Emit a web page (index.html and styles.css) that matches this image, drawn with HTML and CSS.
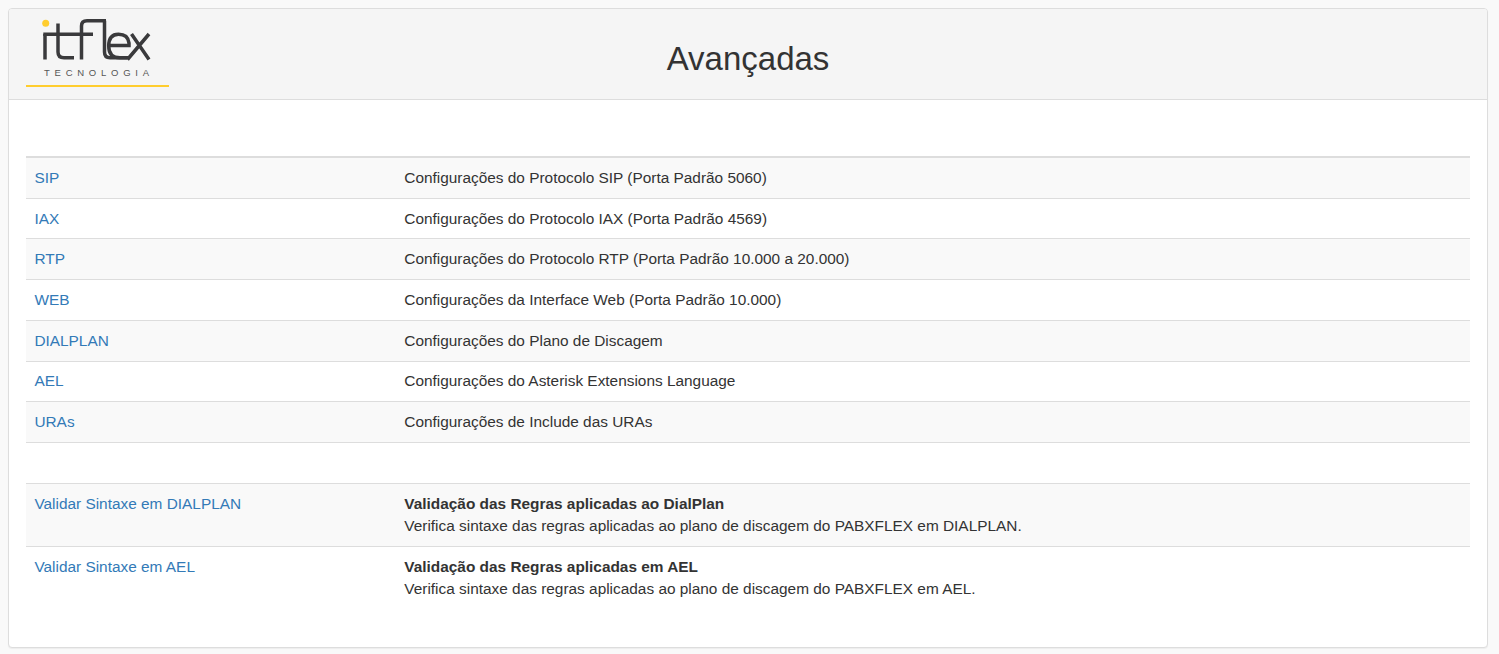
FILE: index.html
```html
<!DOCTYPE html>
<html lang="pt-BR">
<head>
<meta charset="utf-8">
<title>Avançadas</title>
<link rel="stylesheet" href="styles.css">
</head>
<body>
<div class="panel">
  <header class="panel-heading">
    <div class="logo">
      <svg class="logo-mark" width="120" height="50" viewBox="0 0 120 50" aria-label="itflex">
        <circle class="dot" cx="9.700" cy="9.300" r="3.500"/>
        <g class="strokes">
          <path d="M9 20V45.500"/>
          <path d="M7.300 20.200H38"/>
          <path d="M22 9.500V38Q22 43.800 28 43.800H38"/>
          <path d="M45.500 45.500V12Q45.500 6.800 51 6.800H70"/>
          <path d="M38 20.200H57"/>
          <path d="M68.500 6.800V38Q68.500 43.800 74 43.800H91"/>
          <path d="M72.700 31.500H93V29Q92 20.200 82.500 20.200Q72.700 20.200 72.700 32Q72.700 43.800 84 43.800H92"/>
          <path d="M95.500 20L113 45.500M113 20L91.500 45.500"/>
        </g>
      </svg>
      <div class="logo-sub">TECNOLOGIA</div>
    </div>
    <h1 class="panel-title">Avançadas</h1>
  </header>
  <div class="panel-body">
    <table class="settings first">
      <tbody>
        <tr><td class="name"><a href="#">SIP</a></td><td>Configurações do Protocolo SIP (Porta Padrão 5060)</td></tr>
        <tr><td class="name"><a href="#">IAX</a></td><td>Configurações do Protocolo IAX (Porta Padrão 4569)</td></tr>
        <tr><td class="name"><a href="#">RTP</a></td><td>Configurações do Protocolo RTP (Porta Padrão 10.000 a 20.000)</td></tr>
        <tr><td class="name"><a href="#">WEB</a></td><td>Configurações da Interface Web (Porta Padrão 10.000)</td></tr>
        <tr><td class="name"><a href="#">DIALPLAN</a></td><td>Configurações do Plano de Discagem</td></tr>
        <tr><td class="name"><a href="#">AEL</a></td><td>Configurações do Asterisk Extensions Language</td></tr>
        <tr><td class="name"><a href="#">URAs</a></td><td>Configurações de Include das URAs</td></tr>
      </tbody>
    </table>
    <table class="settings second">
      <tbody>
        <tr><td class="name"><a href="#">Validar Sintaxe em DIALPLAN</a></td><td><strong>Validação das Regras aplicadas ao DialPlan</strong><br>Verifica sintaxe das regras aplicadas ao plano de discagem do PABXFLEX em DIALPLAN.</td></tr>
        <tr><td class="name"><a href="#">Validar Sintaxe em AEL</a></td><td><strong>Validação das Regras aplicadas em AEL</strong><br>Verifica sintaxe das regras aplicadas ao plano de discagem do PABXFLEX em AEL.</td></tr>
      </tbody>
    </table>
  </div>
</div>
</body>
</html>
```
FILE: styles.css
```css
* { box-sizing: border-box; }
html, body { height: 100%; }
body {
  margin: 0;
  padding: 8px 11px 6px 8px;
  background: #f9f9f9;
  color: #333;
  font-family: "Liberation Sans", Arial, sans-serif;
  font-size: 15.4px;
  line-height: 22px;
}
.panel {
  height: 640px;
  background: #fff;
  border: 1px solid #ddd;
  border-radius: 4px;
  box-shadow: 0 1px 1px rgba(0,0,0,.05);
  overflow: hidden;
}
.panel-heading {
  position: relative;
  height: 91px;
  background: #f5f5f5;
  border-bottom: 1px solid #ddd;
  display: flex;
  align-items: center;
  justify-content: center;
}
.logo {
  position: absolute;
  left: 17px;
  top: 5px;
  width: 143px;
  height: 73px;
  border-bottom: 2px solid #ffcd2e;
}
.logo-mark { display: block; margin-left: 10px; }
.dot { fill: #ffcd2e; }
.strokes { fill: none; stroke: #3a3a3c; stroke-width: 3.5; }
.logo-sub {
  margin-top: 4px;
  padding-left: 18px;
  font-size: 9.500px;
  line-height: 10px;
  letter-spacing: 4.750px;
  color: #555;
  white-space: nowrap;
}
.panel-title {
  margin: 0;
  font-size: 33px;
  font-weight: 400;
  line-height: 36px;
  color: #333;
  position: relative;
  top: 5px;
}
.panel-body { padding: 56px 17px 0; }
.settings {
  width: 100%;
  border-collapse: collapse;
  table-layout: fixed;
}
.settings td {
  padding: 8.870px 8.800px;
  border-top: 1px solid #ddd;
  vertical-align: top;
}
.settings .name { width: 369.500px; padding-left: 8.400px; }
.settings a { color: #337ab7; text-decoration: none; }
.settings tbody tr:nth-child(odd) { background: #f9f9f9; }
.first { border-top: 2px solid #ddd; border-bottom: 1px solid #ddd; }
.first tr:first-child td { border-top: 0; }
.second { margin-top: 40px; }
```
